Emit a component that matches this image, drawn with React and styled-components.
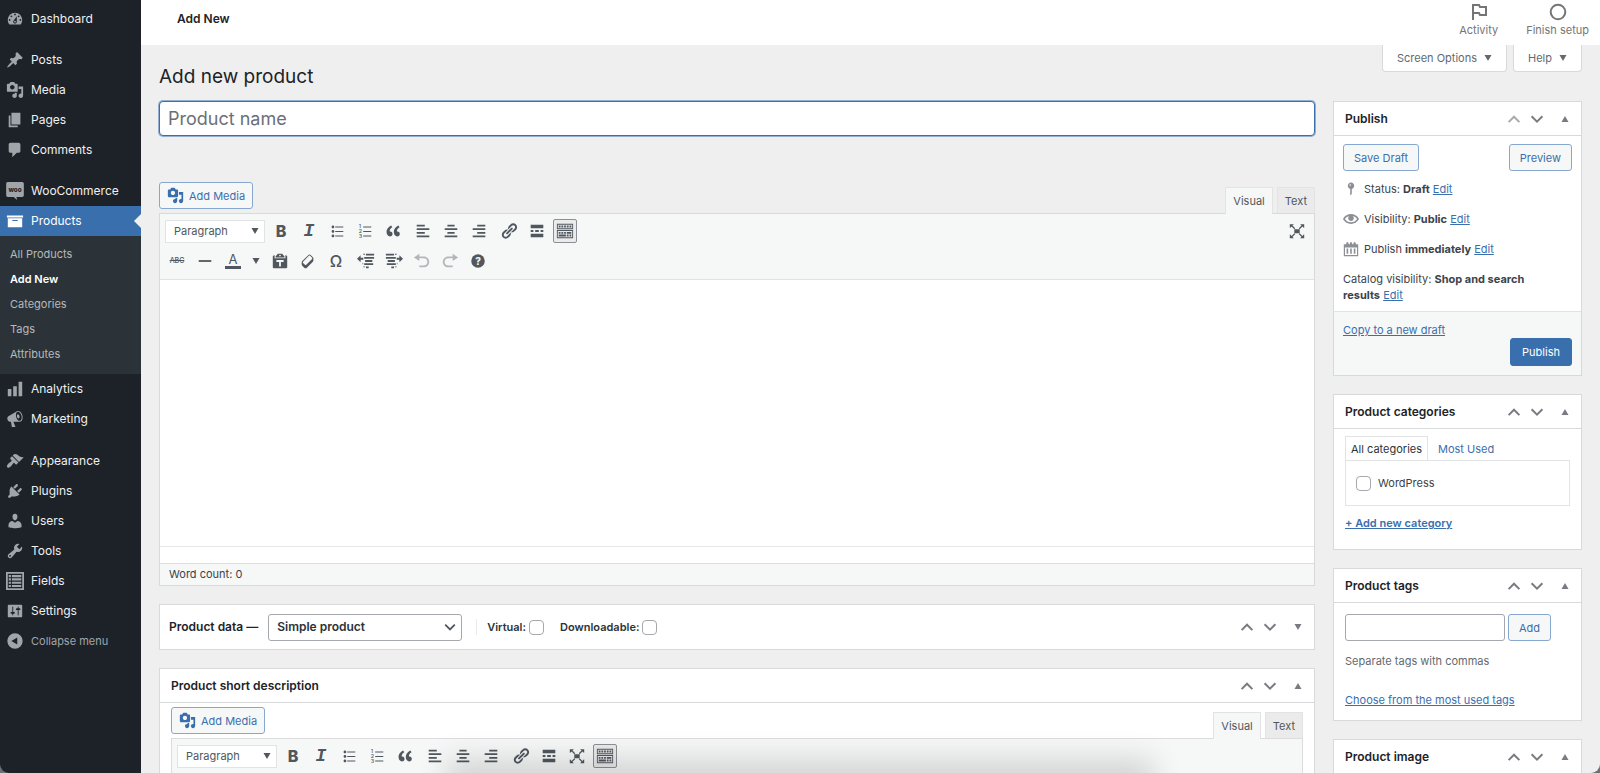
import React from 'react'
import styled, { createGlobalStyle, css } from 'styled-components'

const blue = '#3a6fae'
const line = '#d8d9db'

const GlobalStyle = createGlobalStyle`
  * {
    box-sizing: border-box;
  }
  body {
    margin: 0;
    background: #efeff0;
    color: #3c434a;
    font-family: Inter, 'Liberation Sans', sans-serif;
    font-size: 12px;
    line-height: 16px;
  }
  button, input, select, textarea {
    font: inherit;
    color: inherit;
    margin: 0;
  }
  h1, h2, p, ul {
    margin: 0;
    padding: 0;
  }
  ul {
    list-style: none;
  }
`

/* icons, all on a 20 unit grid */

const paths = {
  dashboard:
    'M3.76 16h12.48c1.1-1.37 1.76-3.11 1.76-5 0-4.42-3.58-8-8-8s-8 3.58-8 8c0 1.89.66 3.63 1.76 5zM10 4c.55 0 1 .45 1 1s-.45 1-1 1-1-.45-1-1 .45-1 1-1zM6 6c.55 0 1 .45 1 1s-.45 1-1 1-1-.45-1-1 .45-1 1-1zm8 0c.55 0 1 .45 1 1s-.45 1-1 1-1-.45-1-1 .45-1 1-1zm-5.37 5.55L12 7v6c0 1.1-.9 2-2 2s-2-.9-2-2c0-.57.24-1.08.63-1.45zM4 10c.55 0 1 .45 1 1s-.45 1-1 1-1-.45-1-1 .45-1 1-1zm12 0c.55 0 1 .45 1 1s-.45 1-1 1-1-.45-1-1 .45-1 1-1zm-5 3c0-.55-.45-1-1-1s-1 .45-1 1 .45 1 1 1 1-.45 1-1z',
  pin:
    'M10.44 3.02l1.82-1.82 6.36 6.35-1.83 1.82c-1.05-.68-2.48-.57-3.41.36l-.75.75c-.92.93-1.04 2.35-.35 3.41l-1.83 1.82-2.41-2.41-2.8 2.79c-.42.42-3.38 2.71-3.8 2.29s1.86-3.39 2.28-3.81l2.79-2.79L4.1 9.36l1.83-1.82c1.05.69 2.48.57 3.4-.36l.75-.75c.93-.92 1.05-2.35.36-3.41z',
  media:
    'M13 11V4c0-.55-.45-1-1-1h-1.67L9 1H5L3.67 3H2c-.55 0-1 .45-1 1v7c0 .55.45 1 1 1h10c.55 0 1-.45 1-1zM7 4.5c1.38 0 2.5 1.12 2.5 2.5S8.38 9.5 7 9.5 4.5 8.38 4.5 7 5.62 4.5 7 4.5zM14 6h5v10.5c0 1.38-1.12 2.5-2.5 2.5S14 17.88 14 16.5s1.12-2.5 2.5-2.5c.17 0 .34.02.5.05V9h-3V6zm-4 8.05V13h2v3.5c0 1.38-1.12 2.5-2.5 2.5S7 17.88 7 16.5 8.12 14 9.5 14c.17 0 .34.02.5.05z',
  page: 'M6 15V2h10v13H6zm-1 1h8v2H3V5h2v11z',
  comments: 'M5 2h9c1.1 0 2 .9 2 2v7c0 1.1-.9 2-2 2h-2l-5 5v-5H5c-1.1 0-2-.9-2-2V4c0-1.1.9-2 2-2z',
  archive: 'M19 4v2H1V4h18zM2 7h16v10H2V7zm11 3V9H7v1h6z',
  chart: 'M18 18V2h-4v16h4zm-6 0V7H8v11h4zm-6 0v-8H2v8h4z',
  megaphone:
    'M18.15 5.94c.46 1.62.38 3.22-.02 4.48-.42 1.28-1.26 2.18-2.3 2.48-.16.06-.26.06-.4.06-.06.02-.12.02-.18.02-.06.02-.14.02-.22.02h-6.8l2.22 5.5c.02.14-.06.26-.14.34-.08.1-.24.16-.34.16H6.95c-.1 0-.26-.06-.34-.16-.08-.08-.16-.2-.14-.34l-1-5.5H4.25l-.02-.02c-.5.06-1.08-.18-1.54-.62s-.88-1.08-1.06-1.88c-.24-.8-.2-1.56-.02-2.2.18-.62.58-1.08 1.06-1.3l.02-.02 9-5.4c.1-.06.18-.1.24-.16.06-.04.14-.08.24-.12.16-.08.28-.12.5-.18 1.04-.3 2.24.1 3.22.98s1.84 2.24 2.26 3.86zm-2.58 5.98h-.02c.4-.1.74-.34 1.04-.7.58-.7.86-1.76.86-3.04 0-.64-.1-1.3-.28-1.98-.34-1.36-1.02-2.5-1.78-3.24s-1.68-1.1-2.46-.88c-.82.22-1.4.96-1.7 2-.32 1.04-.28 2.36.06 3.72.38 1.36 1 2.5 1.8 3.24.78.74 1.62 1.1 2.48.88zm-2.54-7.08c.22-.04.42-.02.62.04.38.16.76.48 1.02 1s.42 1.2.42 1.78c0 .3-.04.56-.12.8-.18.48-.44.84-.86.94-.34.1-.8-.06-1.14-.4s-.64-.86-.78-1.5c-.18-.62-.12-1.24.02-1.72s.48-.84.82-.94z',
  appearance:
    'M14.48 11.06L7.41 3.99l1.5-1.5c.5-.56 2.3-.47 3.51.32 1.21.8 1.43 1.28 2.91 2.1 1.18.64 2.45 1.26 4.45.85zm-.71.71L6.7 4.7 4.93 6.47c-.39.39-.39 1.02 0 1.41l1.06 1.06c.39.39.39 1.03 0 1.42-.6.6-1.43 1.11-2.21 1.69-.35.26-.7.53-1.01.84C1.43 14.23.4 16.08 1.4 17.07c.99 1 2.84-.03 4.18-1.36.31-.31.58-.66.85-1.02.57-.78 1.08-1.61 1.69-2.21.39-.39 1.02-.39 1.41 0l1.06 1.06c.39.39 1.02.39 1.41 0z',
  plugins:
    'M13.11 4.36L9.87 7.6 8 5.73l3.24-3.24c.35-.34 1.05-.2 1.56.32.52.51.66 1.21.31 1.55zm-8 1.77l.91-1.12 9.01 9.01-1.19.84c-.71.71-2.63 1.16-3.82 1.16H6.14L4.9 17.26c-.59.59-1.54.59-2.12 0-.59-.58-.59-1.53 0-2.12l1.24-1.24v-3.88c0-1.13.4-3.19 1.09-3.89zm7.26 3.97l3.24-3.24c.34-.35 1.04-.21 1.55.31.52.51.66 1.21.31 1.55l-3.24 3.25z',
  users:
    'M10 9.25c-2.27 0-2.73-3.44-2.73-3.44C7 4.02 7.82 2 9.97 2c2.16 0 2.98 2.02 2.71 3.81 0 0-.41 3.44-2.68 3.44zm0 2.57L12.72 10c2.39 0 4.52 2.33 4.52 4.53v2.49s-3.65 1.13-7.24 1.13c-3.65 0-7.24-1.13-7.24-1.13v-2.49c0-2.25 1.94-4.48 4.47-4.48z',
  tools:
    'M16.68 9.77c-1.34 1.34-3.3 1.67-4.95.99l-5.41 6.52c-.99.99-2.59.99-3.58 0s-.99-2.59 0-3.57l6.52-5.42c-.68-1.65-.35-3.61.99-4.95 1.28-1.28 3.12-1.62 4.72-1.06l-2.89 2.89 2.82 2.82 2.86-2.87c.53 1.58.18 3.39-1.08 4.65zM3.81 16.21c.4.39 1.04.39 1.43 0 .4-.4.4-1.04 0-1.43-.39-.4-1.03-.4-1.43 0-.39.39-.39 1.03 0 1.43z',
  fields:
    'M0 0h20v20H0V0zm2 2v16h16V2H2zm1 1.300h2.500v2.400H3zm3.500 0H17v2.400H6.500zM3 7h2.500v2.400H3zm3.500 0H17v2.400H6.500zM3 10.700h2.500v2.400H3zm3.500 0H17v2.400H6.500zM3 14.400h2.500v2.400H3zm3.500 0H17v2.400H6.500z',
  settings:
    'M18 16V4c0-.55-.45-1-1-1H3c-.55 0-1 .45-1 1v12c0 .55.45 1 1 1h14c.55 0 1-.45 1-1zM8 11h1c.55 0 1 .45 1 1s-.45 1-1 1H8v1.5c0 .28-.22.5-.5.5s-.5-.22-.5-.5V13H6c-.55 0-1-.45-1-1s.45-1 1-1h1V5.5c0-.28.22-.5.5-.5s.5.22.5.5V11zm5-2h-1c-.55 0-1-.45-1-1s.45-1 1-1h1V5.5c0-.28.22-.5.5-.5s.5.22.5.5V7h1c.55 0 1 .45 1 1s-.45 1-1 1h-1v5.5c0 .28-.22.5-.5.5s-.5-.22-.5-.5V9z',
  collapse: 'M10 1.500a8.500 8.500 0 1 0 0 17 8.500 8.500 0 0 0 0-17zM12.500 6v8L6 10z',
  ul:
    'M5.5 7C4.67 7 4 6.33 4 5.5 4 4.68 4.67 4 5.5 4 6.32 4 7 4.68 7 5.5 7 6.33 6.32 7 5.5 7zM8 5h9v1H8V5zm-2.5 7c-.83 0-1.5-.67-1.5-1.5C4 9.68 4.67 9 5.5 9c.82 0 1.5.68 1.5 1.5 0 .83-.68 1.5-1.5 1.5zM8 10h9v1H8v-1zm-2.5 7c-.83 0-1.5-.67-1.5-1.5 0-.82.67-1.5 1.5-1.5.82 0 1.5.68 1.5 1.5 0 .83-.68 1.5-1.5 1.5zM8 15h9v1H8v-1z',
  quote:
    'M9.49 13.22c0-.74-.2-1.38-.61-1.9-.62-.78-1.83-.88-2.53-.72-.29-1.65 1.11-3.75 2.92-4.65L7.88 4c-2.73 1.3-5.42 4.28-4.96 8.05C3.21 14.43 4.59 16 6.54 16c.85 0 1.56-.25 2.12-.75s.83-1.18.83-2.03zm8.05 0c0-.74-.2-1.38-.61-1.9-.63-.78-1.83-.88-2.53-.72-.29-1.65 1.11-3.75 2.92-4.65L15.93 4c-2.73 1.3-5.41 4.28-4.95 8.05.29 2.38 1.66 3.95 3.61 3.95.85 0 1.56-.25 2.12-.75s.83-1.18.83-2.03z',
  left: 'M12 5V3H3v2h9zm5 4V7H3v2h14zm-5 4v-2H3v2h9zm5 4v-2H3v2h14z',
  center: 'M14 5V3H6v2h8zm3 4V7H3v2h14zm-3 4v-2H6v2h8zm3 4v-2H3v2h14z',
  right: 'M17 5V3H8v2h9zm0 4V7H3v2h14zm0 4v-2H8v2h9zm0 4v-2H3v2h14z',
  link:
    'M17.74 2.76c1.68 1.69 1.68 4.41 0 6.1l-1.53 1.52c-1.12 1.12-2.7 1.47-4.14 1.09l2.62-2.61.76-.77.76-.76c.84-.84.84-2.2 0-3.04-.84-.85-2.2-.85-3.04 0l-.77.76-3.38 3.38c-.37-1.44-.02-3.02 1.1-4.14l1.52-1.53c1.69-1.68 4.42-1.68 6.1 0zM8.59 13.43l5.34-5.34c.42-.42.42-1.1 0-1.52-.44-.43-1.13-.39-1.53 0l-5.33 5.34c-.42.42-.42 1.1 0 1.52.44.43 1.13.39 1.52 0zm-.76 2.29l4.14-4.15c.38 1.44.03 3.02-1.09 4.14l-1.52 1.53c-1.69 1.68-4.41 1.68-6.1 0-1.68-1.68-1.68-4.42 0-6.1l1.53-1.52c1.12-1.12 2.7-1.47 4.14-1.1l-4.14 4.15c-.85.84-.85 2.2 0 3.05.84.84 2.2.84 3.04 0z',
  more: 'M17 7V3H3v4h14zM6 11V9H3v2h3zm6 0V9H8v2h4zm5 0V9h-3v2h3zm0 6v-4H3v4h14z',
  sink:
    'M19 2v6H1V2h18zm-1 5V3H2v4h16zM5 4v2H3V4h2zm3 0v2H6V4h2zm3 0v2H9V4h2zm3 0v2h-2V4h2zm3 0v2h-2V4h2zm2 5v9H1V9h18zm-1 8v-7H2v7h16zM5 11v2H3v-2h2zm3 0v2H6v-2h2zm3 0v2H9v-2h2zm6 0v2h-5v-2h5zm-6 3v2H3v-2h8zm3 0v2h-2v-2h2zm3 0v2h-2v-2h2z',
  expand:
    'M7 8h6v4.500H7zM2 2.500h4.500L5 4l3 3-1 1-3-3-1.500 1.500H2zM18 2.500V6.500h-.5L16 5l-3 3-1-1 3-3-1.500-1.500zM2 18v-4h.5L4 15.500l3-3 1 1-3 3L6.500 18zM18 18h-4.500l1.500-1.500-3-3 1-1 3 3 1.500-1.500h.5z',
  hr: 'M3 9h14v2H3z',
  paste:
    'M12.38 2L15 5v1H5V5l2.64-3h4.74zM10 5c.55 0 1-.44 1-1 0-.55-.45-1-1-1s-1 .45-1 1c0 .56.45 1 1 1zm5.45-1H17c.55 0 1 .45 1 1v12c0 .56-.45 1-1 1H3c-.55 0-1-.44-1-1V5c0-.55.45-1 1-1h1.55L4 4.63V7h12V4.63zM14 11V9H6v2h3v5h2v-5h3z',
  eraser:
    'M14.29 4.59l1.1 1.11c.41.4.61.94.61 1.47v2.12c0 .53-.2 1.07-.61 1.47l-6.63 6.63c-.4.41-.94.61-1.47.61s-1.07-.2-1.47-.61l-1.11-1.1-1.1-1.11c-.41-.4-.61-.94-.61-1.47v-2.12c0-.54.2-1.07.61-1.48l6.63-6.62c.4-.41.94-.61 1.47-.61s1.06.2 1.47.61zm-6.21 9.7l6.42-6.42c.39-.39.39-1.03 0-1.43L12.36 4.3c-.19-.19-.45-.29-.72-.29s-.52.1-.71.29l-6.42 6.42c-.39.4-.39 1.04 0 1.43l2.14 2.14c.38.38 1.04.38 1.43 0z',
  outdent:
    'M7 2h2v1H7zM10 2h9v2h-9zM8 5.500h11v2H8zM9 9h8v2H9zM8 12.500h10v2H8zM10 16h3v2h-3zM6 12.500h1v1H6zM7 16h2v1H7zM0 7.500L4 3.500v3h3v2H4v3z',
  indent:
    'M11 2h2v1h-2zM1 2h9v2H1zM1 5.500h11v2H1zM3 9h8v2H3zM2 12.500h10v2H2zM7 16h3v2H7zM13 12.500h1v1h-1zM11 16h2v1h-2zM20 7.500l-4-4v3h-3v2h3v3z',
  undo: 'M12 5H7V2L1 6l6 4V7h5c2.2 0 4 1.8 4 4s-1.800 4-4 4H7v2h5c3.300 0 6-2.700 6-6s-2.700-6-6-6z',
  redo: 'M8 5h5V2l6 4-6 4V7H8c-2.200 0-4 1.800-4 4s1.800 4 4 4h5v2H8c-3.300 0-6-2.700-6-6s2.700-6 6-6z',
  status:
    'M14 6c0 1.860-1.280 3.410-3 3.860V16c0 1-2 2-2 2V9.860c-1.720-.45-3-2-3-3.860 0-2.210 1.790-4 4-4s4 1.790 4 4zM8 5c0 .55.45 1 1 1s1-.45 1-1-.45-1-1-1-1 .45-1 1z',
  eye:
    'M19.700 9.400C17.700 6 14 3.900 10 3.900S2.300 6 .3 9.400L0 10l.3.6c2 3.400 5.700 5.500 9.700 5.500s7.700-2.100 9.700-5.500l.3-.6-.3-.6zM10 14.100c-3.100 0-6-1.600-7.700-4.100C3.600 8 5.700 6.600 8 6.100c-.9.6-1.500 1.700-1.500 2.900 0 1.900 1.600 3.500 3.500 3.500s3.500-1.600 3.500-3.500c0-1.200-.6-2.300-1.500-2.900 2.300.5 4.400 1.900 5.700 3.900-1.700 2.500-4.600 4.100-7.700 4.100z',
  calendar:
    'M15 4h4v15H1V4h3V3c0-.83.67-1.500 1.500-1.500S7 2.170 7 3v1h1.500V3c0-.83.67-1.500 1.500-1.500s1.500.67 1.500 1.500v1H13V3c0-.83.67-1.500 1.500-1.500S16 2.170 16 3v1zM17.500 17.500V8h-15v9.500h15zM6.500 16V9.500h-2V16h2zm4.500 0V9.500H9V16h2zm4.500 0V9.500h-2V16h2z',
  up: 'M4 13.500l6-6 6 6',
  down: 'M4 7l6 6 6-6',
}

const Svg = styled.svg`
  display: block;
  flex: none;
  width: ${p => p.$size}px;
  height: ${p => p.$size}px;
  fill: currentColor;
`

const Icon = ({ name, size = 18 }) => (
  <Svg viewBox="0 0 20 20" $size={size} aria-hidden="true">
    <path d={paths[name]} fillRule="evenodd" />
  </Svg>
)

const Chevron = ({ name }) => (
  <Svg viewBox="0 0 20 20" $size={18} aria-hidden="true">
    <path d={paths[name]} fill="none" stroke="currentColor" strokeWidth="2.200" />
  </Svg>
)

const Triangle = styled.svg.attrs({ viewBox: '0 0 8 8', 'aria-hidden': true })`
  display: block;
  flex: none;
  width: 8px;
  height: 8px;
  fill: currentColor;
`

const TriUp = () => (
  <Triangle>
    <path d="M0.500 7L4 1l3.500 6z" />
  </Triangle>
)

const TriDown = () => (
  <Triangle>
    <path d="M0.500 1h7L4 7z" />
  </Triangle>
)

const WooIcon = () => (
  <Svg viewBox="0 0 20 20" $size={18} aria-hidden="true">
    <path d="M2 0h16a1.800 1.800 0 0 1 1.800 1.800v13a1.800 1.800 0 0 1-1.800 1.800h-6.500L12.500 20l-4-3.400H2A1.800 1.800 0 0 1 .2 14.800v-13A1.800 1.800 0 0 1 2 0z" />
    <text x="10" y="11" textAnchor="middle" fontSize="7" fontWeight="800" fill="#1d2228">
      woo
    </text>
  </Svg>
)

const OlIcon = () => (
  <Svg viewBox="0 0 20 20" $size={18} aria-hidden="true">
    <path d="M8 5h9v1H8zM8 10h9v1H8zM8 15h9v1H8z" />
    <g fontSize="6" fontWeight="500">
      <text x="3" y="7">1</text>
      <text x="3" y="12.500">2</text>
      <text x="3" y="18">3</text>
    </g>
  </Svg>
)

const HelpIcon = () => (
  <Svg viewBox="0 0 20 20" $size={18} aria-hidden="true">
    <circle cx="10" cy="10" r="7.500" />
    <text x="10" y="14" textAnchor="middle" fontSize="11" fontWeight="800" fill="#f6f7f7">
      ?
    </text>
  </Svg>
)

/* page frame */

const Shell = styled.div`
  display: flex;
  height: 100vh;
  overflow: hidden;
`

const Sidebar = styled.nav`
  flex: none;
  width: 141px;
  padding-top: 4px;
  background: #1d2228;
`

const MenuLink = styled.a`
  display: flex;
  align-items: center;
  gap: 7px;
  height: 30px;
  padding-left: 6px;
  color: #f0f0f1;
  text-decoration: none;
  svg {
    color: #a0a5aa;
  }
  ${p =>
    p.$active &&
    css`
      position: relative;
      background: ${blue};
      color: #fff;
      svg {
        color: #fff;
      }
      &::after {
        content: '';
        position: absolute;
        right: 0;
        border: 7px solid transparent;
        border-right-color: #efeff0;
        border-left-width: 0;
      }
    `}
`

const MenuGap = styled.li`
  height: ${p => (p.$wide ? 12 : 11)}px;
`

const SubMenu = styled.ul`
  padding: 6px 0 7px;
  background: #2c3338;
`

const SubLink = styled.a`
  display: block;
  padding-left: 10px;
  color: ${p => (p.$active ? '#fff' : '#b4b9be')};
  font-weight: ${p => (p.$active ? 600 : 400)};
  font-size: 11px;
  line-height: 25px;
  text-decoration: none;
`

const CollapseButton = styled.button`
  display: flex;
  align-items: center;
  gap: 7px;
  height: 30px;
  padding: 0 0 0 6px;
  border: 0;
  background: none;
  color: #a0a5aa;
  font-size: 11px;
`

const Page = styled.div`
  flex: 1;
  min-width: 0;
`

const TopBar = styled.header`
  display: flex;
  justify-content: space-between;
  height: 45px;
  padding: 0 11px 0 36px;
  background: #fff;
`

const TopTitle = styled.div`
  padding-top: 11px;
  color: #1d2327;
  font-weight: 600;
`

const TopActions = styled.div`
  display: flex;
  gap: 28px;
`

const TopAction = styled.button`
  display: flex;
  flex-direction: column;
  align-items: center;
  gap: 1px;
  padding: 3px 0 0;
  border: 0;
  background: none;
  color: #757575;
  font-size: 11px;
`

const Content = styled.main`
  padding: 0 18px;
`

const Heading = styled.div`
  display: flex;
  justify-content: space-between;
  align-items: flex-start;
  height: 56px;
`

const Title = styled.h1`
  padding-top: 20px;
  color: #1d2327;
  font-weight: 400;
  font-size: 19px;
  line-height: 24px;
`

const MetaTabs = styled.div`
  display: flex;
  gap: 6px;
`

const MetaTab = styled.button`
  display: flex;
  align-items: center;
  gap: 7px;
  height: 27px;
  padding: 0 14px;
  border: 1px solid ${line};
  border-top: 0;
  border-radius: 0 0 4px 4px;
  background: #fff;
  color: #646970;
  font-size: 11px;
`

const Columns = styled.div`
  display: flex;
  align-items: flex-start;
  gap: 18px;
`

const MainColumn = styled.div`
  flex: 1;
  min-width: 0;
`

const SideColumn = styled.div`
  flex: none;
  width: 249px;
`

/* controls */

const TitleInput = styled.input`
  display: block;
  width: 100%;
  height: 35px;
  margin-bottom: 46px;
  padding: 0 8px;
  border: 1px solid ${blue};
  border-radius: 4px;
  outline: 0;
  background: #fff;
  box-shadow: 0 0 0 1px rgba(58, 111, 174, 0.5);
  font-size: 18px;
  &::placeholder {
    color: #6c7076;
    opacity: 1;
  }
`

const Button = styled.button`
  display: flex;
  align-items: center;
  gap: 5px;
  height: 27px;
  padding: 0 10px;
  border: 1px solid #86a8d0;
  border-radius: 3px;
  background: #f6f7f7;
  color: ${blue};
  font-size: 11px;
  ${p =>
    p.$primary &&
    css`
      height: 28px;
      padding: 0 11px;
      border-color: ${blue};
      background: ${blue};
      color: #fff;
    `}
`

const MediaButton = styled(Button)`
  margin-bottom: 4px;
  padding: 0 7px;
`

const TextLink = styled.a`
  color: ${blue};
  font-weight: ${p => (p.$bold ? 600 : 400)};
`

const Checkbox = styled.input.attrs({ type: 'checkbox' })`
  appearance: none;
  flex: none;
  width: 15px;
  height: 15px;
  border: 1px solid #a5a8ac;
  border-radius: 4px;
  background: #fff;
`

/* editor */

const EditorTools = styled.div`
  display: flex;
  justify-content: space-between;
  align-items: flex-end;
`

const Tabs = styled.div`
  display: flex;
  gap: 4px;
`

const Tab = styled.button`
  position: relative;
  height: ${p => (p.$active ? 27 : 26)}px;
  margin-bottom: ${p => (p.$active ? -1 : 0)}px;
  padding: 0 7px;
  border: 1px solid #e2e3e5;
  border-bottom: 0;
  background: ${p => (p.$active ? '#f6f7f7' : '#ebebec')};
  color: #50575e;
  font-size: 11px;
`

const Editor = styled.div`
  border: 1px solid #dcdcde;
`

const Toolbar = styled.div`
  display: flex;
  flex-direction: column;
  gap: 6px;
  padding: 5px 5px 6px;
  border-bottom: 1px solid #e2e3e5;
  background: #f6f7f7;
  color: #50575e;
`

const ToolRow = styled.div`
  display: flex;
  align-items: center;
  gap: 6px;
`

const ToolGroup = styled.div`
  display: flex;
  align-items: center;
  gap: 4px;
  margin-left: ${p => (p.$end ? 'auto' : 0)};
`

const Tool = styled.button`
  display: flex;
  align-items: center;
  justify-content: center;
  width: ${p => (p.$narrow ? 13 : 24)}px;
  height: 24px;
  padding: 0;
  border: 1px solid ${p => (p.$active ? '#8c8f94' : 'transparent')};
  border-radius: 2px;
  background: ${p => (p.$active ? '#ebebec' : 'none')};
  color: ${p => (p.disabled ? '#b4b7ba' : '#50575e')};
`

const Glyph = styled.span`
  font-weight: ${p => p.$weight};
  font-size: 16px;
  line-height: 16px;
`

const Slanted = styled.span`
  font: italic 700 18px/18px 'Liberation Mono', monospace;
`

const Struck = styled.span`
  font-weight: 500;
  font-size: 7px;
  text-decoration: line-through;
`

const ColorMark = styled.span`
  padding: 0 4px;
  border-bottom: 3px solid #50575e;
  font-size: 13px;
  line-height: 13px;
`

const SelectBox = styled.div`
  display: grid;
  align-items: center;
  width: ${p => p.$width}px;
  svg {
    grid-area: 1 / 1;
    justify-self: end;
    margin-right: 6px;
    pointer-events: none;
  }
`

const FormatSelect = styled.select`
  grid-area: 1 / 1;
  appearance: none;
  height: 23px;
  padding: 0 8px;
  border: 1px solid #e2e3e5;
  border-radius: 0;
  background: #fff;
  color: #50575e;
  font-size: 11px;
`

const TypeSelect = styled.select`
  grid-area: 1 / 1;
  appearance: none;
  height: 27px;
  padding: 0 8px;
  border: 1px solid #a5a8ac;
  border-radius: 3px;
  background: #fff;
  color: #2c3338;
  font-weight: 600;
  font-size: 12px;
`

const EditArea = styled.textarea`
  display: block;
  width: 100%;
  height: 266px;
  padding: 9px;
  border: 0;
  outline: 0;
  background: #fff;
  resize: none;
`

const PathBar = styled.div`
  height: 17px;
  border-top: 1px solid #e6e7e8;
  background: #fff;
`

const StatusBar = styled.div`
  padding: 2px 9px 3px;
  border-top: 1px solid #dcdcde;
  background: #f6f7f7;
  font-size: 11px;
`

/* boxes */

const Box = styled.section`
  margin-bottom: 18px;
  border: 1px solid ${line};
  background: #fff;
`

const BoxHead = styled.div`
  display: flex;
  align-items: center;
  justify-content: space-between;
  height: 34px;
  padding: 0 12px 0 11px;
  border-bottom: 1px solid ${line};
`

const BoxTitle = styled.h2`
  color: #1d2327;
  font-weight: 600;
  font-size: 12px;
`

const Handles = styled.div`
  display: flex;
  align-items: center;
  gap: 5px;
  color: #787c82;
`

const Handle = styled.button`
  display: flex;
  padding: 0;
  border: 0;
  background: none;
  color: ${p => (p.disabled ? '#a7aaad' : 'inherit')};
  &:last-child {
    padding-left: 10px;
  }
`

const DataBar = styled.div`
  display: flex;
  align-items: center;
  gap: 10px;
  height: 44px;
  padding: 0 12px 0 9px;
`

const DataOptions = styled.div`
  display: flex;
  gap: 16px;
  margin: 0 auto 0 4px;
  padding-left: 10px;
  border-left: 1px solid #ebebec;
`

const OptionLabel = styled.label`
  display: flex;
  align-items: center;
  gap: 3px;
  color: #2c3338;
  font-weight: 600;
  font-size: 11px;
`

const DescriptionBody = styled.div`
  padding: 4px 11px 11px;
`

const PublishActions = styled.div`
  display: flex;
  justify-content: space-between;
  padding: 8px 9px 10px;
`

const PublishList = styled.ul`
  padding: 0 9px 8px;
`

const PublishItem = styled.li`
  display: flex;
  align-items: flex-start;
  gap: 5px;
  margin-bottom: 14px;
  font-size: 11px;
  svg {
    color: #8c8f94;
  }
`

const Catalog = styled.li`
  padding-right: 24px;
  font-size: 11px;
`

const PublishFooter = styled.div`
  display: flex;
  flex-direction: column;
  padding: 10px 9px 9px;
  border-top: 1px solid #e2e3e5;
  background: #f6f7f7;
  font-size: 11px;
  a {
    align-self: flex-start;
  }
  button {
    align-self: flex-end;
  }
`

const SideBody = styled.div`
  display: flex;
  flex-direction: column;
  align-items: flex-start;
  padding: ${p => p.$top}px 11px ${p => p.$bottom}px;
  font-size: 11px;
`

const CategoryTabs = styled.div`
  display: flex;
  gap: 9px;
`

const CategoryTab = styled.button`
  height: 25px;
  margin-bottom: -1px;
  padding: 0 ${p => (p.$active ? 5 : 0)}px;
  border: solid ${p => (p.$active ? '#e2e3e5' : 'transparent')};
  border-width: 1px 1px 0;
  background: ${p => (p.$active ? '#fff' : 'none')};
  color: ${p => (p.$active ? '#2c3338' : blue)};
  font-size: 11px;
`

const CategoryPanel = styled.label`
  display: flex;
  align-items: center;
  gap: 7px;
  width: 100%;
  height: 46px;
  margin-bottom: 9px;
  padding: 0 10px;
  border: 1px solid #e2e3e5;
`

const TagForm = styled.div`
  display: flex;
  gap: 3px;
  width: 100%;
  margin-bottom: 12px;
`

const TagInput = styled.input`
  width: 160px;
  height: 27px;
  padding: 0 8px;
  border: 1px solid #a5a8ac;
  border-radius: 3px;
  background: #fff;
`

const Hint = styled.p`
  margin-bottom: 23px;
  color: #646970;
`

/* soft shade along the bottom of the window */
const BottomShade = styled.div`
  position: fixed;
  right: 29%;
  bottom: -14px;
  left: 29%;
  height: 10px;
  box-shadow: 0 0 30px 18px rgba(0, 0, 0, 0.14);
  pointer-events: none;
`

const Corners = styled.div`
  position: fixed;
  inset: 0;
  border-radius: 0 0 9px 9px;
  box-shadow: 0 0 0 9px #6d7174;
  pointer-events: none;
`

const menu = [
  [['Dashboard', 'dashboard']],
  [['Posts', 'pin'], ['Media', 'media'], ['Pages', 'page'], ['Comments', 'comments']],
  [['WooCommerce', 'woo'], ['Products', 'archive'], ['Analytics', 'chart'], ['Marketing', 'megaphone']],
  [
    ['Appearance', 'appearance'],
    ['Plugins', 'plugins'],
    ['Users', 'users'],
    ['Tools', 'tools'],
    ['Fields', 'fields'],
    ['Settings', 'settings'],
  ],
]

const productLinks = ['All Products', 'Add New', 'Categories', 'Tags', 'Attributes']

const AdminMenu = () => (
  <Sidebar>
    <ul>
      {menu.map((group, i) => (
        <React.Fragment key={i}>
          {i > 0 && <MenuGap $wide={i === 3} />}
          {group.map(([label, icon]) => (
            <li key={label}>
              <MenuLink href="#" $active={label === 'Products'}>
                {icon === 'woo' ? <WooIcon /> : <Icon name={icon} />}
                {label}
              </MenuLink>
              {label === 'Products' && (
                <SubMenu>
                  {productLinks.map(name => (
                    <li key={name}>
                      <SubLink href="#" $active={name === 'Add New'}>
                        {name}
                      </SubLink>
                    </li>
                  ))}
                </SubMenu>
              )}
            </li>
          ))}
        </React.Fragment>
      ))}
    </ul>
    <CollapseButton>
      <Icon name="collapse" />
      Collapse menu
    </CollapseButton>
  </Sidebar>
)

const BoxHandles = ({ first, closed }) => (
  <Handles>
    <Handle aria-label="Move up" disabled={first}>
      <Chevron name="up" />
    </Handle>
    <Handle aria-label="Move down">
      <Chevron name="down" />
    </Handle>
    <Handle aria-label="Toggle panel">{closed ? <TriDown /> : <TriUp />}</Handle>
  </Handles>
)

const SideBox = ({ title, first, children }) => (
  <Box>
    <BoxHead>
      <BoxTitle>{title}</BoxTitle>
      <BoxHandles first={first} />
    </BoxHead>
    {children}
  </Box>
)

const EditorHeader = () => (
  <EditorTools>
    <MediaButton>
      <Icon name="media" size={17} />
      Add Media
    </MediaButton>
    <Tabs>
      <Tab $active>Visual</Tab>
      <Tab>Text</Tab>
    </Tabs>
  </EditorTools>
)

const IconTool = ({ label, name, ...rest }) => (
  <Tool aria-label={label} {...rest}>
    <Icon name={name} />
  </Tool>
)

const FormatRow = ({ inlineExpand }) => (
  <ToolRow>
    <ToolGroup>
      <SelectBox $width={100}>
        <FormatSelect aria-label="Format">
          <option>Paragraph</option>
        </FormatSelect>
        <TriDown />
      </SelectBox>
      <Tool aria-label="Bold">
        <Glyph $weight={800}>B</Glyph>
      </Tool>
      <Tool aria-label="Italic">
        <Slanted>I</Slanted>
      </Tool>
      <IconTool label="Bulleted list" name="ul" />
      <Tool aria-label="Numbered list">
        <OlIcon />
      </Tool>
      <IconTool label="Blockquote" name="quote" />
    </ToolGroup>
    <ToolGroup>
      <IconTool label="Align left" name="left" />
      <IconTool label="Align center" name="center" />
      <IconTool label="Align right" name="right" />
    </ToolGroup>
    <ToolGroup>
      <IconTool label="Insert link" name="link" />
      <IconTool label="Read more" name="more" />
      {inlineExpand && <IconTool label="Fullscreen" name="expand" />}
      <IconTool label="Toolbar toggle" name="sink" $active />
    </ToolGroup>
    {!inlineExpand && (
      <ToolGroup $end>
        <IconTool label="Distraction-free" name="expand" />
      </ToolGroup>
    )}
  </ToolRow>
)

const ExtraRow = () => (
  <ToolRow>
    <ToolGroup>
      <Tool aria-label="Strikethrough">
        <Struck>ABC</Struck>
      </Tool>
      <IconTool label="Horizontal line" name="hr" />
      <Tool aria-label="Text color">
        <ColorMark>A</ColorMark>
      </Tool>
      <Tool aria-label="Pick text color" $narrow>
        <TriDown />
      </Tool>
    </ToolGroup>
    <ToolGroup>
      <IconTool label="Paste as text" name="paste" />
      <IconTool label="Clear formatting" name="eraser" />
      <Tool aria-label="Special character">
        <Glyph $weight={500}>Ω</Glyph>
      </Tool>
    </ToolGroup>
    <ToolGroup>
      <IconTool label="Decrease indent" name="outdent" />
      <IconTool label="Increase indent" name="indent" />
      <IconTool label="Undo" name="undo" disabled />
      <IconTool label="Redo" name="redo" disabled />
      <Tool aria-label="Keyboard shortcuts">
        <HelpIcon />
      </Tool>
    </ToolGroup>
  </ToolRow>
)

const App = () => (
  <>
    <GlobalStyle />
    <Shell>
      <AdminMenu />
      <Page>
        <TopBar>
          <TopTitle>Add New</TopTitle>
          <TopActions>
            <TopAction>
              <Svg viewBox="0 0 18 18" $size={18} aria-hidden="true">
                <path d="M3 17V2h6l1 2h6v8h-6l-1-2H3" fill="none" stroke="currentColor" strokeWidth="2" />
              </Svg>
              Activity
            </TopAction>
            <TopAction>
              <Svg viewBox="0 0 18 18" $size={18} aria-hidden="true">
                <circle cx="9" cy="9" r="7.300" fill="none" stroke="currentColor" strokeWidth="2" />
              </Svg>
              Finish setup
            </TopAction>
          </TopActions>
        </TopBar>
        <Content>
          <Heading>
            <Title>Add new product</Title>
            <MetaTabs>
              <MetaTab>
                Screen Options <TriDown />
              </MetaTab>
              <MetaTab>
                Help <TriDown />
              </MetaTab>
            </MetaTabs>
          </Heading>
          <Columns>
            <MainColumn>
              <TitleInput placeholder="Product name" aria-label="Product name" />
              <EditorHeader />
              <Box as="div">
                <Toolbar>
                  <FormatRow />
                  <ExtraRow />
                </Toolbar>
                <EditArea aria-label="Product description" />
                <PathBar />
                <StatusBar>Word count: 0</StatusBar>
              </Box>
              <Box>
                <DataBar>
                  <BoxTitle>Product data —</BoxTitle>
                  <SelectBox $width={194}>
                    <TypeSelect aria-label="Product type">
                      <option>Simple product</option>
                    </TypeSelect>
                    <Svg viewBox="0 0 20 20" $size={12} aria-hidden="true">
                      <path d="M2 6l8 8 8-8" fill="none" stroke="#50575e" strokeWidth="3" />
                    </Svg>
                  </SelectBox>
                  <DataOptions>
                    <OptionLabel>
                      Virtual: <Checkbox />
                    </OptionLabel>
                    <OptionLabel>
                      Downloadable: <Checkbox />
                    </OptionLabel>
                  </DataOptions>
                  <BoxHandles closed />
                </DataBar>
              </Box>
              <Box>
                <BoxHead>
                  <BoxTitle>Product short description</BoxTitle>
                  <BoxHandles />
                </BoxHead>
                <DescriptionBody>
                  <EditorHeader />
                  <Editor>
                    <Toolbar>
                      <FormatRow inlineExpand />
                    </Toolbar>
                    <EditArea aria-label="Product short description" />
                  </Editor>
                </DescriptionBody>
              </Box>
            </MainColumn>
            <SideColumn>
              <SideBox title="Publish" first>
                <PublishActions>
                  <Button>Save Draft</Button>
                  <Button>Preview</Button>
                </PublishActions>
                <PublishList>
                  <PublishItem>
                    <Icon name="status" size={16} />
                    <span>
                      Status: <b>Draft</b> <TextLink href="#">Edit</TextLink>
                    </span>
                  </PublishItem>
                  <PublishItem>
                    <Icon name="eye" size={16} />
                    <span>
                      Visibility: <b>Public</b> <TextLink href="#">Edit</TextLink>
                    </span>
                  </PublishItem>
                  <PublishItem>
                    <Icon name="calendar" size={16} />
                    <span>
                      Publish <b>immediately</b> <TextLink href="#">Edit</TextLink>
                    </span>
                  </PublishItem>
                  <Catalog>
                    Catalog visibility: <b>Shop and search results</b> <TextLink href="#">Edit</TextLink>
                  </Catalog>
                </PublishList>
                <PublishFooter>
                  <TextLink href="#">Copy to a new draft</TextLink>
                  <Button $primary>Publish</Button>
                </PublishFooter>
              </SideBox>
              <SideBox title="Product categories">
                <SideBody $top={7} $bottom={18}>
                  <CategoryTabs>
                    <CategoryTab $active>All categories</CategoryTab>
                    <CategoryTab>Most Used</CategoryTab>
                  </CategoryTabs>
                  <CategoryPanel>
                    <Checkbox />
                    WordPress
                  </CategoryPanel>
                  <TextLink href="#" $bold>
                    + Add new category
                  </TextLink>
                </SideBody>
              </SideBox>
              <SideBox title="Product tags">
                <SideBody $top={11} $bottom={12}>
                  <TagForm>
                    <TagInput aria-label="New tag" />
                    <Button>Add</Button>
                  </TagForm>
                  <Hint>Separate tags with commas</Hint>
                  <TextLink href="#">Choose from the most used tags</TextLink>
                </SideBody>
              </SideBox>
              <SideBox title="Product image" />
            </SideColumn>
          </Columns>
        </Content>
      </Page>
    </Shell>
    <BottomShade />
    <Corners />
  </>
)

export default App
